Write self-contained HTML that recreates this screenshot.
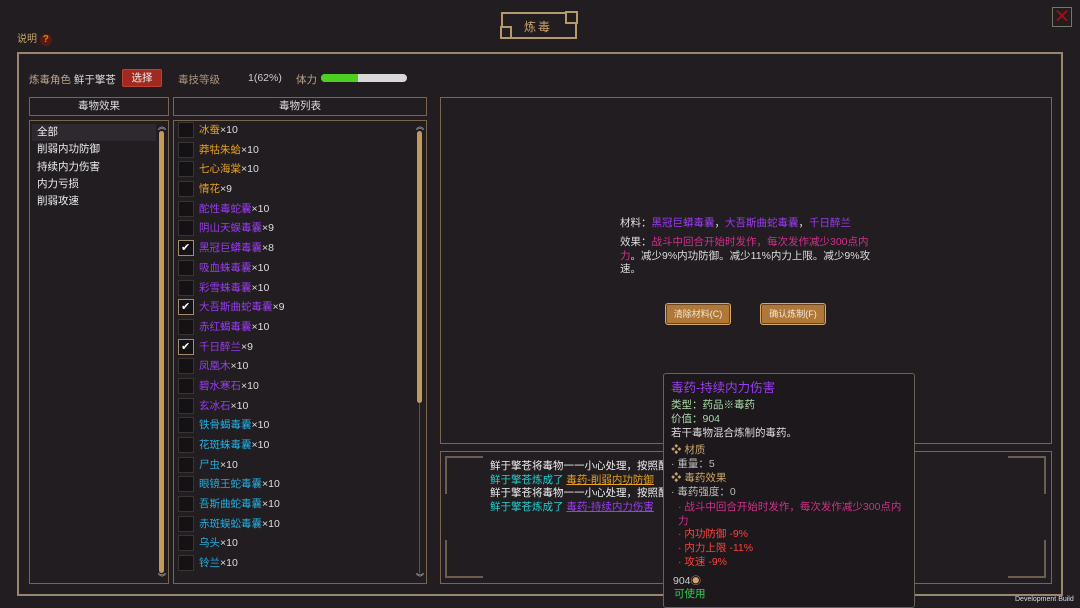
<!DOCTYPE html>
<html><head><meta charset="utf-8"><style>
*{margin:0;padding:0;box-sizing:border-box}
body{width:1080px;height:608px;background:#211d21;font-family:"Liberation Sans","Noto Sans CJK SC",sans-serif;font-size:10.5px;color:#ddd;position:relative;overflow:hidden}
.a{position:absolute}
.bx{position:absolute;border:1px solid #7a6650}
.gold{color:#c9a46a}
.or{color:#e8a020}.pu{color:#9a3cf0}.cy{color:#22aee0}
.row{position:absolute;left:178px;height:18px;line-height:17px;white-space:nowrap}
.cb{display:inline-block;width:16px;height:16px;border:1px solid #3a3430;background:#151215;vertical-align:middle;margin-right:5px;position:relative}
.cb.on{border-color:#a08c6a}
.cb.on:after{content:"✔";position:absolute;left:2px;top:0px;color:#fff;font-size:11px;line-height:14px}
.sb{position:absolute;width:5px;border-radius:3px;background:#c49a5c}
.btn{position:absolute;background:#b07838;border:1px solid #d8a868;border-radius:3px;color:#f2e6d4;text-align:center;font-size:9px;line-height:20px;box-shadow:inset 0 0 0 1px #6a4420}
</style></head><body>
<!-- title -->
<div class="a" style="left:501px;top:12px;width:76px;height:27px;border:2px solid #b59a6a"></div>
<div class="a" style="left:500px;top:26px;width:12px;height:13px;border:2px solid #b59a6a;background:#211d21"></div>
<div class="a" style="left:565px;top:11px;width:13px;height:13px;border:2px solid #b59a6a;background:#211d21"></div>
<div class="a gold" style="left:524px;top:18px;font-size:12px;letter-spacing:2px">炼毒</div>
<div class="a" style="left:1052px;top:7px;width:20px;height:20px;border:1px solid #776;color:#a01010;font-size:20px;line-height:18px;text-align:center">✕</div>
<div class="a gold" style="left:17px;top:30px;font-size:10px">说明 <span style="display:inline-block;width:12px;height:12px;border-radius:6px;background:#5a1a10;color:#e08020;text-align:center;line-height:12px;font-weight:bold">?</span></div>
<div class="bx" style="left:17px;top:52px;width:1046px;height:544px;border:2px solid #9a866a"></div>
<!-- top bar -->
<div class="a" style="left:29px;top:72px;color:#b8a48a">炼毒角色 <span style="color:#ddd">鲜于擎苍</span></div>
<div class="a" style="left:122px;top:69px;width:40px;height:18px;background:#a02a20;border:1px solid #c04030;border-radius:2px;color:#eee;text-align:center;line-height:16px">选择</div>
<div class="a" style="left:178px;top:72px;color:#a89478">毒技等级</div>
<div class="a" style="left:248px;top:72px;color:#ccc">1(62%)</div>
<div class="a" style="left:296px;top:72px;color:#b8a48a">体力</div>
<div class="a" style="left:321px;top:74px;width:86px;height:8px;background:#d8d8d8;border-radius:4px;overflow:hidden"><div style="width:37px;height:8px;background:#4ed020"></div></div>
<!-- headers -->
<div class="bx" style="left:29px;top:97px;width:140px;height:19px;text-align:center;line-height:17px;color:#ddd">毒物效果</div>
<div class="bx" style="left:173px;top:97px;width:254px;height:19px;text-align:center;line-height:17px;color:#ddd">毒物列表</div>
<div class="bx" style="left:29px;top:120px;width:140px;height:464px"></div>
<div class="bx" style="left:173px;top:120px;width:254px;height:464px"></div>
<div class="a" style="left:32px;top:124px;width:124px;height:17px;background:#2e292e"></div>
<div class="a" style="left:37px;top:124px;line-height:17.3px;color:#eee">全部<br>削弱内功防御<br>持续内力伤害<br>内力亏损<br>削弱攻速</div>
<div class="a" style="left:158px;top:121px;color:#ccc;font-size:8px">︽</div>
<div class="sb" style="left:159px;top:131px;height:442px"></div>
<div class="a" style="left:158px;top:572px;color:#ccc;font-size:8px">︾</div>
<div class="a" style="left:416px;top:121px;color:#ccc;font-size:8px">︽</div>
<div class="sb" style="left:417px;top:131px;height:272px"></div>
<div class="a" style="left:419px;top:403px;width:1px;height:170px;background:#555"></div>
<div class="a" style="left:416px;top:572px;color:#ccc;font-size:8px">︾</div>
<div class="row" style="top:122px"><span class="cb"></span><span class="or">冰蚕</span>×10</div>
<div class="row" style="top:142px"><span class="cb"></span><span class="or">莽牯朱蛤</span>×10</div>
<div class="row" style="top:161px"><span class="cb"></span><span class="or">七心海棠</span>×10</div>
<div class="row" style="top:181px"><span class="cb"></span><span class="or">情花</span>×9</div>
<div class="row" style="top:201px"><span class="cb"></span><span class="pu">酡性毒蛇囊</span>×10</div>
<div class="row" style="top:220px"><span class="cb"></span><span class="pu">阴山天蜈毒囊</span>×9</div>
<div class="row" style="top:240px"><span class="cb on"></span><span class="pu">黑冠巨蟒毒囊</span>×8</div>
<div class="row" style="top:260px"><span class="cb"></span><span class="pu">吸血蛛毒囊</span>×10</div>
<div class="row" style="top:280px"><span class="cb"></span><span class="pu">彩雪蛛毒囊</span>×10</div>
<div class="row" style="top:299px"><span class="cb on"></span><span class="pu">大吾斯曲蛇毒囊</span>×9</div>
<div class="row" style="top:319px"><span class="cb"></span><span class="pu">赤红蝎毒囊</span>×10</div>
<div class="row" style="top:339px"><span class="cb on"></span><span class="pu">千日醉兰</span>×9</div>
<div class="row" style="top:358px"><span class="cb"></span><span class="pu">凤凰木</span>×10</div>
<div class="row" style="top:378px"><span class="cb"></span><span class="pu">碧水寒石</span>×10</div>
<div class="row" style="top:398px"><span class="cb"></span><span class="pu">玄冰石</span>×10</div>
<div class="row" style="top:417px"><span class="cb"></span><span class="cy">铁骨蝎毒囊</span>×10</div>
<div class="row" style="top:437px"><span class="cb"></span><span class="cy">花斑蛛毒囊</span>×10</div>
<div class="row" style="top:457px"><span class="cb"></span><span class="cy">尸虫</span>×10</div>
<div class="row" style="top:476px"><span class="cb"></span><span class="cy">眼镜王蛇毒囊</span>×10</div>
<div class="row" style="top:496px"><span class="cb"></span><span class="cy">吾斯曲蛇毒囊</span>×10</div>
<div class="row" style="top:516px"><span class="cb"></span><span class="cy">赤斑蜈蚣毒囊</span>×10</div>
<div class="row" style="top:535px"><span class="cb"></span><span class="cy">乌头</span>×10</div>
<div class="row" style="top:555px"><span class="cb"></span><span class="cy">铃兰</span>×10</div>
<!-- right -->
<div class="bx" style="left:440px;top:97px;width:612px;height:347px"></div>
<div class="a" style="left:620px;top:215px;color:#ddd;white-space:nowrap">材料：<span class="pu">黑冠巨蟒毒囊</span>，<span class="pu">大吾斯曲蛇毒囊</span>，<span class="pu">千日醉兰</span></div>
<div class="a" style="left:620px;top:236px;width:265px;line-height:13.5px;color:#ddd">效果：<span style="color:#d0308a">战斗中回合开始时发作，每次发作减少300点内力</span>。减少9%内功防御。减少11%内力上限。减少9%攻速。</div>
<div class="btn" style="left:665px;top:303px;width:66px;height:22px">清除材料(C)</div>
<div class="btn" style="left:760px;top:303px;width:66px;height:22px">确认炼制(F)</div>
<div class="bx" style="left:440px;top:451px;width:612px;height:133px"></div>
<div class="a" style="left:445px;top:456px;width:38px;height:38px;border-left:2px solid #6a5e50;border-top:2px solid #6a5e50"></div>
<div class="a" style="left:445px;top:540px;width:38px;height:38px;border-left:2px solid #6a5e50;border-bottom:2px solid #6a5e50"></div>
<div class="a" style="left:1008px;top:456px;width:38px;height:38px;border-right:2px solid #6a5e50;border-top:2px solid #6a5e50"></div>
<div class="a" style="left:1008px;top:540px;width:38px;height:38px;border-right:2px solid #6a5e50;border-bottom:2px solid #6a5e50"></div>
<div class="a" style="left:490px;top:460px;line-height:13.5px;color:#eee;white-space:nowrap">鲜于擎苍将毒物一一小心处理，按照配方开始炼制。<br><span style="color:#20d0d0">鲜于擎苍炼成了</span> <span class="or" style="text-decoration:underline">毒药-削弱内功防御</span><br>鲜于擎苍将毒物一一小心处理，按照配方开始炼制。<br><span style="color:#20d0d0">鲜于擎苍炼成了</span> <span class="pu" style="text-decoration:underline">毒药-持续内力伤害</span></div>
<!-- tooltip -->
<div class="a" style="left:663px;top:373px;width:252px;height:235px;background:#1c181b;border:1px solid #6a6258;border-radius:3px"></div>
<div class="a" style="left:671px;top:377px;font-size:12.5px" ><span class="pu">毒药-持续内力伤害</span></div>
<div class="a" style="left:671px;top:398px;line-height:14px;color:#a8d8a8">类型：药品※毒药<br>价值：904<br><span style="color:#ddd">若干毒物混合炼制的毒药。</span></div>
<div class="a" style="left:671px;top:443px;line-height:14px;color:#c9a46a;white-space:nowrap">❖ 材质<br><span style="color:#bbb">· 重量：5</span><br>❖ 毒药效果<br><span style="color:#bbb">· 毒药强度：0</span></div>
<div class="a" style="left:678px;top:500px;width:232px;line-height:14px;color:#d0308a">· 战斗中回合开始时发作，每次发作减少300点内力</div>
<div class="a" style="left:678px;top:527px;line-height:14px;color:#ff4040">· 内功防御 -9%<br>· 内力上限 -11%<br>· 攻速 -9%</div>
<div class="a" style="left:673px;top:573px;color:#ccc">904<span style="color:#d8a070">◉</span></div>
<div class="a" style="left:674px;top:586px;color:#30d050">可使用</div>
<div class="a" style="left:1015px;top:596px;font-size:7px;color:#ddd">Development Build</div>
</body></html>
